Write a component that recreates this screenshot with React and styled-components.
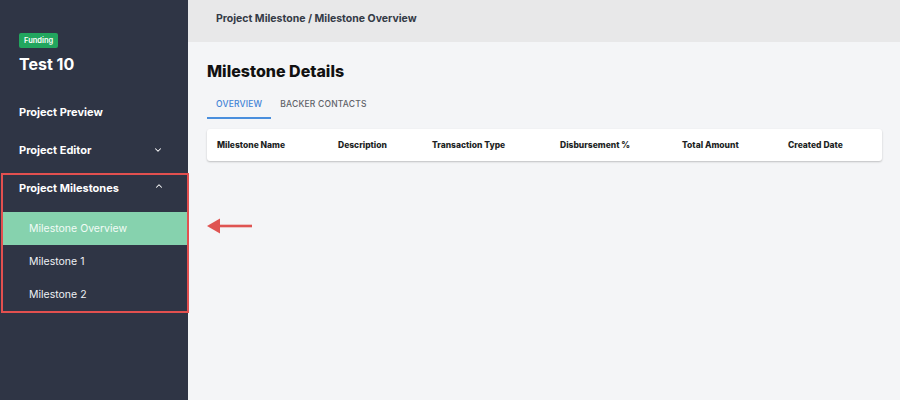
import React from 'react';
import styled, {createGlobalStyle} from "styled-components";
import {ChevronDown, ChevronUp} from "lucide-react";

const Global = createGlobalStyle`
  body {
    margin: 0;
    font-family: "Inter", "Open Sans", sans-serif;
    background: #f4f5f7;
  }
`

const Page = styled.div`
  display: flex;
  width: 900px;
  height: 400px;
  overflow: hidden;
`

const Sidebar = styled.div`
  position: relative;
  z-index: 1;
  width: 188px;
  flex-shrink: 0;
  background-color: #2f3545;
  padding-top: 33px;
  box-sizing: border-box;
  color: white;
`

const BadgeRow = styled.div`
  display: flex;
  padding-left: 19px;
`

const Badge = styled.span`
  display: flex;
  align-items: center;
  height: 15px;
  padding: 0 5px;
  border-radius: 2px;
  background-color: #22a65e;
  font-size: 7.5px;
  font-weight: 600;
`

const Title = styled.div`
  margin: 7px 0 20px 19px;
  font-size: 16px;
  line-height: 18px;
  font-weight: 700;
`

const NavItem = styled.div`
  display: flex;
  align-items: ${props => props.top ? "flex-start" : "center"};
  justify-content: space-between;
  height: ${props => props.h || 38}px;
  padding: ${props => props.top ? "6px 23px 0 16px" : "0 25px 0 19px"};
  box-sizing: border-box;
  font-size: 11px;
  line-height: 14px;
  font-weight: 700;
`

const Group = styled.div`
  margin: 4px -1px 0 1px;
  border: 2px solid #e3504f;
`

const SubItem = styled.div`
  display: flex;
  align-items: center;
  height: 33px;
  padding-left: 26px;
  font-size: 10.5px;
  background-color: ${props => props.active ? "#86d2ae" : "transparent"};
  color: ${props => props.active ? "#f2fbf6" : "#eef0f4"};
`

const Main = styled.div`
  flex: 1;
  position: relative;
  background-color: #f4f5f7;
`

const TopBar = styled.div`
  height: 42px;
  display: flex;
  align-items: center;
  padding-left: 28px;
  padding-bottom: 6px;
  box-sizing: border-box;
  background-color: #e8e8e9;
  font-size: 10.5px;
  font-weight: 700;
  color: #343a46;
`

const Content = styled.div`
  padding: 19px 18px 0 19px;
`

const Heading = styled.h1`
  margin: 0;
  font-size: 16px;
  line-height: 20px;
  font-weight: 800;
  color: #111;
`

const Tabs = styled.div`
  display: flex;
  margin-top: 11px;
`

const Tab = styled.div`
  padding: 0 9px;
  height: 27px;
  line-height: 24px;
  font-size: 8.5px;
  letter-spacing: 0.2px;
  box-sizing: border-box;
  border-bottom: 2px solid ${props => props.active ? "#4a8fdd" : "transparent"};
  color: ${props => props.active ? "#3f83d6" : "#5f6268"};
  font-weight: 500;
`

const Card = styled.div`
  margin-top: 10px;
  height: 32px;
  display: grid;
  grid-template-columns: 121px 94px 128px 122px 106px 1fr;
  align-items: center;
  padding-left: 10px;
  background: white;
  border-radius: 3px;
  box-shadow: 0 1px 2px rgba(0, 0, 0, 0.22);
`

const Col = styled.div`
  font-size: 8.5px;
  font-weight: 800;
  color: #1d1f24;
`

const Arrow = styled.svg`
  position: absolute;
  left: 19px;
  top: 217px;
`

const columns = ["Milestone Name", "Description", "Transaction Type", "Disbursement %", "Total Amount", "Created Date"]

const App = () => {
    return (
        <Page>
            <Global/>
            <Sidebar>
                <BadgeRow><Badge>Funding</Badge></BadgeRow>
                <Title>Test 10</Title>
                <NavItem>Project Preview</NavItem>
                <NavItem>Project Editor<ChevronDown size={10} strokeWidth={2.5}/></NavItem>
                <Group>
                    <NavItem top h={37}>Project Milestones<ChevronUp size={10} strokeWidth={2.5}/></NavItem>
                    <SubItem active>Milestone Overview</SubItem>
                    <SubItem>Milestone 1</SubItem>
                    <SubItem>Milestone 2</SubItem>
                </Group>
            </Sidebar>
            <Main>
                <TopBar>Project Milestone / Milestone Overview</TopBar>
                <Content>
                    <Heading>Milestone Details</Heading>
                    <Tabs>
                        <Tab active>OVERVIEW</Tab>
                        <Tab>BACKER CONTACTS</Tab>
                    </Tabs>
                    <Card>
                        {columns.map(c => <Col key={c}>{c}</Col>)}
                    </Card>
                </Content>
                <Arrow width="46" height="18" viewBox="0 0 46 18">
                    <polygon points="0,9 13,1.5 13,16.5" fill="#df5452"/>
                    <rect x="12" y="7.7" width="33" height="2.6" fill="#df5452"/>
                </Arrow>
            </Main>
        </Page>
    );
};

export default App;
